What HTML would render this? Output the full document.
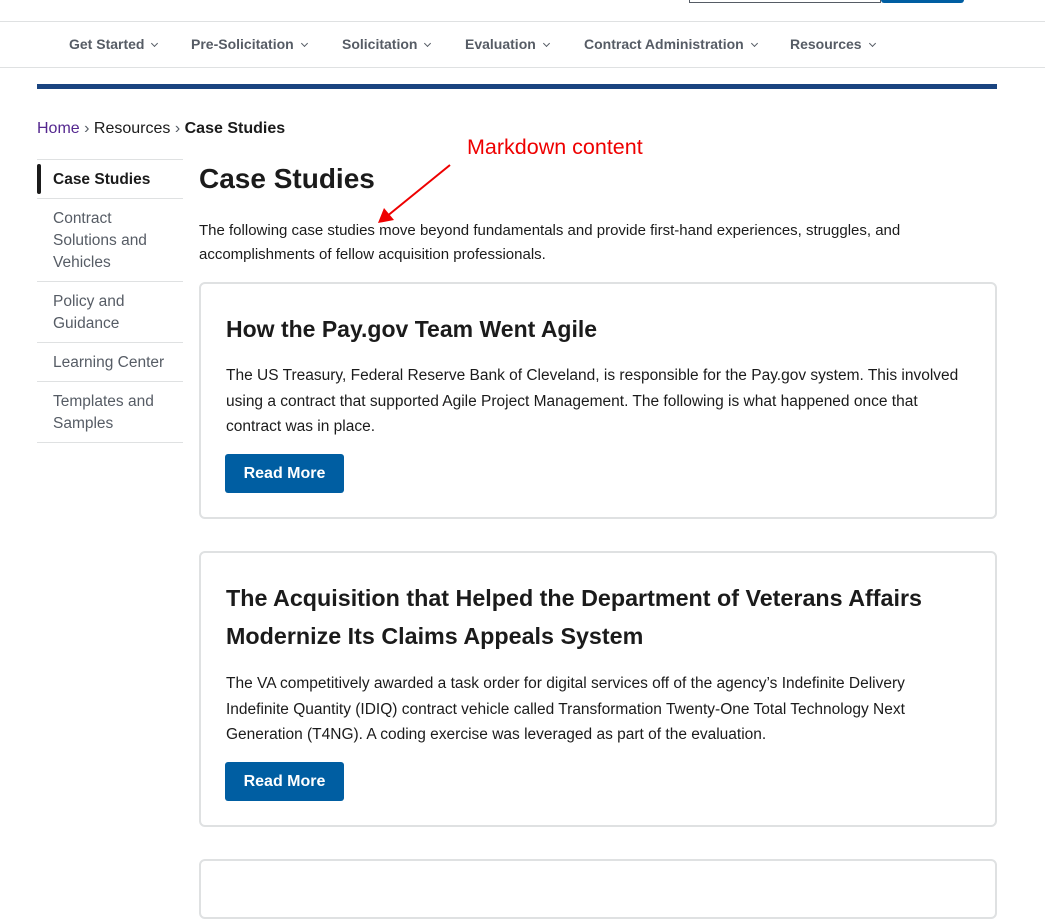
<!DOCTYPE html>
<html><head><meta charset="utf-8"><style>
*{margin:0;padding:0;box-sizing:border-box}
body{width:1045px;height:876px;overflow:hidden;background:#fff;font-family:"Liberation Sans",sans-serif;color:#1b1b1b;position:relative}
.a{position:absolute;white-space:nowrap}
.nav{font-size:14px;font-weight:bold;color:#565c65;top:36px}
.nav:after{content:"";display:inline-block;width:4px;height:4px;border-right:1.5px solid #565c65;border-bottom:1.5px solid #565c65;transform:rotate(45deg);margin-left:8px;position:relative;top:-3px}
.side{font-size:15.5px;color:#565c65;left:53px;line-height:22px}
.hr{position:absolute;left:37px;width:146px;height:1px;background:#dfe1e2}
.card{position:absolute;left:199px;width:798px;border:2px solid #dfe1e2;border-radius:6px}
.h2{font-size:23px;font-weight:bold;line-height:38px}
.p{font-size:15.5px;line-height:25.5px}
.btn{position:absolute;background:#005ea2;color:#fff;font-weight:bold;font-size:16px;width:119px;height:39px;border-radius:3px;text-align:center;line-height:39px}
</style></head><body>
<div class="a" style="left:689px;top:0;width:192px;height:3px;border:1px solid #565c65;border-top:none"></div>
<div class="a" style="left:881px;top:0;width:83px;height:3px;background:#005ea2;border-radius:0 0 3px 3px"></div>
<div class="a" style="left:0;top:21px;width:1045px;height:1px;background:#dfe1e2"></div>
<div class="a" style="left:0;top:67px;width:1045px;height:1px;background:#dfe1e2"></div>
<div class="a nav" style="left:69px">Get Started</div>
<div class="a nav" style="left:191px">Pre-Solicitation</div>
<div class="a nav" style="left:342px">Solicitation</div>
<div class="a nav" style="left:465px">Evaluation</div>
<div class="a nav" style="left:584px">Contract Administration</div>
<div class="a nav" style="left:790px">Resources</div>
<div class="a" style="left:37px;top:84px;width:960px;height:5px;background:#1a4480"></div>
<div class="a" style="left:37px;top:120px;font-size:16px"><span style="color:#54278f">Home</span> <span style="color:#565c65">›</span> Resources <span style="color:#565c65">›</span> <b>Case Studies</b></div>
<div class="a" style="left:467px;top:135px;font-size:21.5px;color:#e00">Markdown content</div>
<svg class="a" style="left:370px;top:160px" width="90" height="70"><line x1="80" y1="5" x2="16" y2="57" stroke="#e00" stroke-width="2"/><polygon points="8,63 14,48 24,60" fill="#e00"/></svg>
<div class="hr" style="top:159px"></div>
<div class="a" style="left:37px;top:164px;width:4px;height:30px;background:#1b1b1b;border-radius:2px"></div>
<div class="a side" style="top:169px;color:#1b1b1b;font-weight:bold">Case Studies</div>
<div class="hr" style="top:198px"></div>
<div class="a side" style="top:208px">Contract<br>Solutions and<br>Vehicles</div>
<div class="hr" style="top:281px"></div>
<div class="a side" style="top:291px">Policy and<br>Guidance</div>
<div class="hr" style="top:342px"></div>
<div class="a side" style="top:352px">Learning Center</div>
<div class="hr" style="top:381px"></div>
<div class="a side" style="top:391px">Templates and<br>Samples</div>
<div class="hr" style="top:442px"></div>
<div class="a" style="left:199px;top:163px;font-size:28px;font-weight:bold">Case Studies</div>
<div class="a" style="left:199px;top:219px;font-size:15px;line-height:24px">The following case studies move beyond fundamentals and provide first-hand experiences, struggles, and<br>accomplishments of fellow acquisition professionals.</div>
<div class="card" style="top:282px;height:237px">
<div class="a h2" style="left:25px;top:26px">How the Pay.gov Team Went Agile</div>
<div class="a p" style="left:25px;top:79px">The US Treasury, Federal Reserve Bank of Cleveland, is responsible for the Pay.gov system. This involved<br>using a contract that supported Agile Project Management. The following is what happened once that<br>contract was in place.</div>
<div class="btn" style="left:24px;top:170px">Read More</div>
</div>
<div class="card" style="top:551px;height:276px">
<div class="a h2" style="left:25px;top:26px;font-size:23.3px">The Acquisition that Helped the Department of Veterans Affairs<br>Modernize Its Claims Appeals System</div>
<div class="a p" style="left:25px;top:118px">The VA competitively awarded a task order for digital services off of the agency’s Indefinite Delivery<br>Indefinite Quantity (IDIQ) contract vehicle called Transformation Twenty-One Total Technology Next<br>Generation (T4NG). A coding exercise was leveraged as part of the evaluation.</div>
<div class="btn" style="left:24px;top:209px">Read More</div>
</div>
<div class="card" style="top:859px;height:60px"></div>
</body></html>
